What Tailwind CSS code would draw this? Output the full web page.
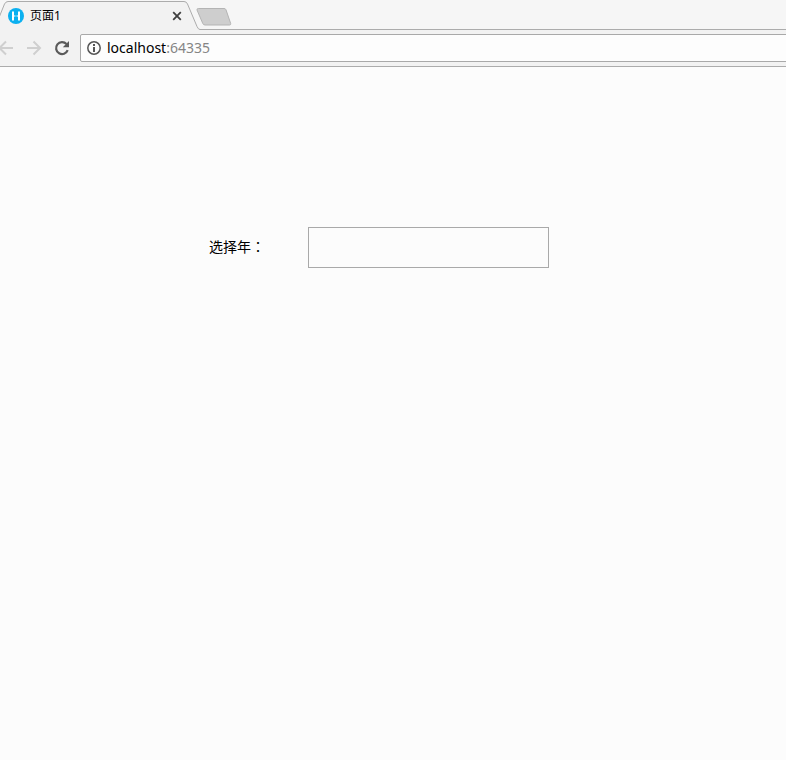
<!DOCTYPE html>
<html lang="zh-CN">
<head>
<meta charset="utf-8">
<meta name="viewport" content="width=device-width, initial-scale=1">
<title>页面1</title>
<script src="https://cdn.jsdelivr.net/npm/@tailwindcss/browser@4"></script>
</head>
<body class="flex min-h-screen flex-col overflow-x-hidden bg-[#fcfcfc] font-['Noto_Sans','Noto_Sans_CJK_SC',sans-serif] text-black">
  <header>
    <div class="flex h-[30px] border-b border-[#acacac] bg-[#f6f6f6]">
      <div class="relative flex h-[30px] w-[200px] shrink-0 items-center pt-[2px] pr-[17px] pl-2">
        <svg class="absolute inset-0" width="200" height="30" viewBox="0 0 200 30" aria-hidden="true">
          <path d="M-6 30 L4.500 4 Q5.800 1.500 8 1.500 H184 Q186.500 1.500 187.500 4 L197 26.500 Q198.300 29.500 200 29.500 V30Z" fill="#f2f2f2"/>
          <path d="M-6 30 L4.500 4 Q5.800 1.500 8 1.500 H184 Q186.500 1.500 187.500 4 L197 26.500 Q198.300 29.500 200 29.500" fill="none" stroke="#acacac"/>
        </svg>
        <svg class="relative shrink-0" width="16" height="16" viewBox="0 0 16 16" aria-hidden="true">
          <circle cx="8" cy="8" r="8" fill="#0bb0f0"/>
          <path d="M5 3.500V12.500M11 3.500V12.500" stroke="#fff" stroke-width="2"/>
          <path d="M6 8H7.500M8.500 8H10" stroke="#fff" stroke-width="1.200"/>
        </svg>
        <span class="relative ml-[6px] flex-1 text-xs leading-4">页面1</span>
        <button type="button" aria-label="关闭标签页" class="relative flex size-3 items-center justify-center">
          <svg width="10" height="10" viewBox="0 0 10 10"><path d="M1.200 1.200L8.800 8.800M8.800 1.200L1.200 8.800" stroke="#3f3f3f" stroke-width="1.800"/></svg>
        </button>
      </div>
      <button type="button" aria-label="新标签页" class="-ml-1 self-start pt-2">
        <svg width="36" height="18" viewBox="0 0 36 18"><path d="M2.300 .5H28Q29.500 .5 30 1.800L34.700 15.500Q35 17 33.500 17H9Q7.400 17 6.800 15.500L1 2Q.7 .5 2.300 .5Z" fill="#cecece" stroke="#b4b4b4"/></svg>
      </button>
    </div>
    <div class="flex h-[37px] items-center border-b border-[#acacac] bg-[#f2f2f2]">
      <button type="button" aria-label="后退" class="w-[26px] shrink-0">
        <svg width="14" height="16" viewBox="0 0 14 16" fill="none" stroke="#cfcfcf" stroke-width="2"><path d="M13 8H0M6 1.500L-.5 8L6 14.500"/></svg>
      </button>
      <button type="button" aria-label="前进" class="w-7 shrink-0">
        <svg width="16" height="16" viewBox="0 0 16 16" fill="none" stroke="#cfcfcf" stroke-width="2"><path d="M1 8H14M7.500 1.500L14 8L7.500 14.500"/></svg>
      </button>
      <button type="button" aria-label="重新加载" class="w-[26px] shrink-0">
        <svg width="16" height="16" viewBox="0 0 16 16"><path d="M13.700 10.200A6 6 0 1 1 12.500 4" fill="none" stroke="#5a5a5a" stroke-width="2.200"/><path d="M15 1V7.200H8.800Z" fill="#5a5a5a"/></svg>
      </button>
      <div role="group" aria-label="地址栏" class="-mr-1 flex h-7 flex-1 items-center rounded-xs border border-[#a9a9a9] bg-[#fdfdfd] pl-[6px]">
        <svg width="14" height="14" viewBox="0 0 14 14" aria-hidden="true"><circle cx="7" cy="7" r="6.200" fill="none" stroke="#555" stroke-width="1.500"/><path d="M7 6V11M7 3V5" stroke="#555" stroke-width="2"/></svg>
        <a href="#" class="ml-[6px] font-['Noto_Sans',sans-serif] text-sm leading-5">localhost<span class="text-[#858585]">:64335</span></a>
      </div>
    </div>
  </header>
  <main class="flex flex-1 items-start px-[209px] pt-40">
    <label for="year" class="w-[99px] shrink-0 text-sm leading-[38px]">选择年<span class="font-['Noto_Sans_CJK_TC',sans-serif]" lang="zh-TW">：</span></label>
    <input id="year" type="text" class="h-[41px] w-[241px] shrink-0 border border-[#a9a9a9] bg-transparent px-2 text-sm outline-none">
  </main>
</body>
</html>
